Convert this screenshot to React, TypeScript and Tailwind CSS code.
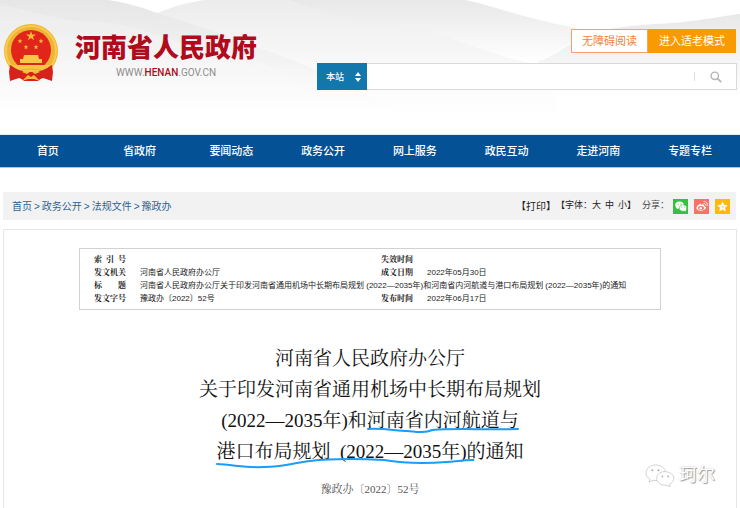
import React from 'react'

const navItems = ['首页', '省政府', '要闻动态', '政务公开', '网上服务', '政民互动', '走进河南', '专题专栏']
const crumbs = ['首页', '政务公开', '法规文件', '豫政办']

const HeaderBackground = () => (
  <svg className="absolute inset-0 h-full w-full" viewBox="0 0 740 135" preserveAspectRatio="none" aria-hidden="true">
    <defs>
      <linearGradient id="fade" x1="0" y1="0" x2="0" y2="1">
        <stop offset="0" stopColor="#e6e6e6" />
        <stop offset="0.5" stopColor="#f2f2f2" />
        <stop offset="1" stopColor="#ffffff" />
      </linearGradient>
      <linearGradient id="fadeSoft" x1="0" y1="0" x2="0" y2="1">
        <stop offset="0" stopColor="#ececec" />
        <stop offset="0.6" stopColor="#fafafa" />
        <stop offset="1" stopColor="#ffffff" />
      </linearGradient>
      <linearGradient id="fadeShort" x1="0" y1="0" x2="0" y2="1">
        <stop offset="0" stopColor="#e8e8e8" />
        <stop offset="1" stopColor="#ffffff" />
      </linearGradient>
    </defs>
    <path d="M538 62C556 56 562 48 580 40C600 28 630 26 660 24C695 22 715 17 740 14V100H538Z" fill="url(#fadeShort)" />
    <path d="M465 0C490 5 520 17 575 28C590 32 562 52 538 62L400 40L288 0Z" fill="url(#fadeShort)" />
    <path d="M157 13C175 6 190 2 205 0H288C310 6 335 18 365 22C390 26 410 24 432 31C460 42 500 58 550 68L560 118H150Z" fill="url(#fadeSoft)" />
    <path d="M0 0H108C130 3 145 9 160 14C195 24 220 35 270 52C330 75 370 95 390 112H0Z" fill="url(#fade)" />
    <path d="M0 4C30 10 60 22 100 22C140 24 170 45 220 50C270 62 300 80 310 100L0 112Z" fill="#ffffff" fillOpacity="0.2" />
  </svg>
)

const Emblem = () => (
  <svg className="h-[58px] w-[54px] shrink-0" viewBox="0 0 54 58" aria-hidden="true">
    <path d="M8 40L6 56L16 53L20 57H34L38 53L48 56L46 40Z" fill="#d31c18" />
    <circle cx="27" cy="27" r="27" fill="#efb433" />
    <circle cx="27" cy="27" r="25" fill="none" stroke="#f8cc50" strokeWidth="2" />
    <circle cx="27" cy="26" r="20" fill="#e2251b" />
    <path d="M27 7l1.2 3.5H32l-3 2.2 1.1 3.6L27 14.1l-3.1 2.2 1.1-3.6-3-2.2h3.8Z" fill="#f5bb35" />
    {[[16, 17], [37, 17], [22, 23], [32, 23]].map(([x, y]) => (
      <path key={`${x}-${y}`} transform={`translate(${x} ${y})`} d="M0-2.4L.7-.7 2.4-.7 1 .5 1.5 2.3 0 1.2-1.5 2.3-1 .5-2.4-.7-.7-.7Z" fill="#f5bb35" />
    ))}
    <path d="M20 31h14l1 4h3v4H16v-4h3ZM9 41h36l-3 4H12Z" fill="#f7c548" />
    <path d="M6 41C12 44 17 46 21 46L24 48H30L33 46C37 46 42 44 48 41L49 48L48 57L39 54L32 57H22L15 54L6 57L5 48Z" fill="#d7211b" />
    <path d="M18 48L24 44H30L36 48L31 50L27 47L23 50ZM18 57L24 51L27 53L30 51L36 57L30 55H24Z" fill="#f3b936" />
    <path d="M8 41C16 49 38 49 46 41" fill="none" stroke="#f7c548" strokeWidth="1.5" />
  </svg>
)

const Header = () => (
  <header className="relative h-[135px] border-b border-[#e3edf4]">
    <HeaderBackground />
    <div className="relative flex justify-between pr-[3px] pl-1">
      <a href="#" className="flex items-start pt-6">
        <Emblem />
        <span className="ml-[17px] flex flex-col items-center pt-1">
          <span className="text-[26px] leading-10 font-black text-[#b00a1c]">河南省人民政府</span>
          <span className="font-[Roboto] text-[10px] leading-[10px] text-[#8d8d8d]">
            WWW.<b className="font-medium text-[#b00a1c]">HENAN</b>.GOV.CN
          </span>
        </span>
      </a>
      <div className="flex w-[420px] flex-col items-end pt-[29px]">
        <div className="mr-px flex h-6 text-[11px] leading-5">
          <button className="w-[77px] border border-[#f7a26b] bg-white text-[#f37f3c]">无障碍阅读</button>
          <button className="w-[88px] bg-[#f99b00] text-white">进入适老模式</button>
        </div>
        <form className="mt-[10px] flex h-[27px] w-full border border-[#d9d9d9] bg-white">
          <div className="relative -my-px -ml-px w-[50px] bg-[#1277ad]">
            <select aria-label="搜索范围" className="h-full w-full appearance-none bg-transparent pl-[9px] text-[9px] font-medium text-white outline-none">
              <option>本站</option>
            </select>
            <svg className="pointer-events-none absolute top-2 right-[6px] h-3 w-[6px]" viewBox="0 0 6 12" fill="#fff" aria-hidden="true">
              <path d="M3 1L6 5H0ZM3 11L0 7H6Z" />
            </svg>
          </div>
          <input aria-label="搜索" className="min-w-0 flex-1 bg-transparent px-2 text-xs outline-none" />
          <button type="button" aria-label="搜索" className="my-2 flex w-[42px] items-center justify-center border-l border-[#dddddd]">
            <svg className="h-3 w-3" viewBox="0 0 12 12" fill="none" stroke="#b5b5b5" aria-hidden="true">
              <circle cx="4.8" cy="4.8" r="3.7" strokeWidth="1.4" />
              <path d="M7.6 7.6L11.2 11.2" strokeWidth="1.8" />
            </svg>
          </button>
        </form>
      </div>
    </div>
  </header>
)

const Share = () => (
  <div className="flex gap-[6px]">
    <button aria-label="微信" className="flex size-[15px] items-center justify-center bg-[#35c03f]">
      <svg className="h-[11px] w-3" viewBox="0 0 24 22" aria-hidden="true">
        <ellipse cx="9" cy="8" rx="8.5" ry="7" fill="#fff" />
        <path d="M4 12L3 17L8 14Z" fill="#fff" />
        <ellipse cx="16" cy="14" rx="7.5" ry="6.3" fill="#fff" stroke="#35c03f" />
        <path d="M18 19L22 21L21 16Z" fill="#fff" />
        <g fill="#35c03f"><circle cx="6.3" cy="6" r="1.2" /><circle cx="12" cy="6" r="1.2" /><circle cx="13.5" cy="12" r="1" /><circle cx="18.5" cy="12" r="1" /></g>
      </svg>
    </button>
    <button aria-label="微博" className="flex size-[15px] items-center justify-center bg-[#fa7267]">
      <svg className="size-3" viewBox="0 0 24 24" fill="none" stroke="#fff" aria-hidden="true">
        <path d="M10 7C4 9 0 14 1 17C3 23 17 23 20 16C21 13 17 13 16 12C16 8 13 8 10 10Z" fill="#fff" stroke="none" />
        <ellipse cx="10" cy="16" rx="6" ry="4" fill="#fa7267" stroke="none" />
        <circle cx="9.5" cy="16.5" r="2.4" fill="#fff" stroke="none" />
        <path d="M15 3C20 2 24 7 22 12M15.5 7C18 6.5 19.5 8.5 18.5 11" strokeWidth="1.8" />
      </svg>
    </button>
    <button aria-label="收藏" className="flex size-[15px] items-center justify-center bg-[#fdb90e]">
      <svg className="size-[11px]" viewBox="0 0 24 24" aria-hidden="true">
        <path d="M12 1l3.4 7.3 8 1-5.9 5.5 1.5 7.9-7-3.9-7 3.9 1.5-7.9L.6 9.3l8-1Z" fill="#fff" />
        <path d="M9 11h6l-5 4h5" fill="none" stroke="#fdb90e" strokeWidth="1" />
      </svg>
    </button>
  </div>
)

const Toolbar = () => (
  <div className="mr-1 ml-[3px] flex h-7 items-center justify-between bg-[#f2f2f2] pr-[6px] pl-[9px]">
    <nav aria-label="当前位置" className="flex gap-[2px] text-[10px] text-[#2d6496]">
      {crumbs.map((item, i) => (
        <React.Fragment key={item}>
          {i > 0 && <span>&gt;</span>}
          <a href="#">{item}</a>
        </React.Fragment>
      ))}
    </nav>
    <div className="flex items-center text-[9px] text-[#222222]">
      <button className="text-[10px]">【打印】</button>
      <span>【字体：</span>
      <span className="flex gap-1">
        <button>大</button>
        <button>中</button>
        <button>小</button>
      </span>
      <span>】</span>
      <span className="mr-1 ml-[6px] text-[#444444]">分享：</span>
      <Share />
    </div>
  </div>
)

const Label = ({ children }: { children: string }) => (
  <th scope="row" className="p-0 text-left font-['Liberation_Serif','Noto_Serif_CJK_SC','Noto_Sans_CJK_SC',serif] font-bold">
    <span className="block w-8 [text-align-last:justify]">{children}</span>
  </th>
)

const InfoTable = () => (
  <div className="mx-[75px] border border-[#d2d2d2] py-1 pr-2 pl-[14px]">
    <table className="w-full table-fixed text-[8px] leading-[13px] text-[#222222]">
      <colgroup>
        <col className="w-[46px]" />
        <col className="w-[241px]" />
        <col className="w-[46px]" />
        <col />
      </colgroup>
      <tbody>
        <tr>
          <Label>索 引 号</Label>
          <td />
          <Label>失效时间</Label>
          <td />
        </tr>
        <tr>
          <Label>发文机关</Label>
          <td>河南省人民政府办公厅</td>
          <Label>成文日期</Label>
          <td>2022年05月30日</td>
        </tr>
        <tr>
          <Label>标 题</Label>
          <td colSpan={3} className="whitespace-nowrap">
            河南省人民政府办公厅关于印发河南省通用机场中长期布局规划 (2022—2035年)和河南省内河航道与港口布局规划 (2022—2035年)的通知
          </td>
        </tr>
        <tr>
          <Label>发文字号</Label>
          <td>豫政办〔2022〕52号</td>
          <Label>发布时间</Label>
          <td>2022年06月17日</td>
        </tr>
      </tbody>
    </table>
  </div>
)

const Watermark = () => (
  <div className="absolute right-[21px] bottom-[21px] flex items-center gap-1">
    <svg className="h-[23px] w-[30px]" viewBox="0 0 31 24" fill="#fff" stroke="#c4c4c4" strokeWidth="0.8" aria-hidden="true">
      <path d="M11 1C5 1 1 5 1 9.5C1 12 2.5 14.5 5 16L4 19L8 17C14 18.5 21 15 21 9C21 4.5 17 1 11 1Z" />
      <path d="M20 8C15 8 12 11.5 12 15C12 19 16 22.5 21 22L26 23.5L25.5 21C28 19.5 30 17.5 30 15C30 11 26 8 20 8Z" />
      <g fill="#aaa" stroke="none"><circle cx="7.5" cy="6.5" r="1" /><circle cx="14" cy="6.5" r="1" /><circle cx="18" cy="13" r="0.9" /><circle cx="24" cy="13" r="0.9" /></g>
    </svg>
    <span className="text-[18px] leading-6 text-white [text-shadow:1px_1px_1px_#999999,0_0_1px_#bbbbbb]">珂尔</span>
  </div>
)

const App = () => {
  return (
    <div className="flex min-h-screen flex-col bg-white font-['Liberation_Sans','Noto_Sans_CJK_SC',sans-serif]">
      <Header />
      <nav className="grid h-[33px] grid-cols-8 items-center border-b border-[#a9c5dc] bg-[#045295] pr-1 pl-[2px] text-center text-[11px] font-medium text-white">
        {navItems.map((item) => (
          <a key={item} href="#">{item}</a>
        ))}
      </nav>
      <div className="h-6" />
      <Toolbar />
      <main className="relative mx-[3px] mt-[9px] flex-1 border border-b-0 border-[#e6e6e6] pt-[18px]">
        <InfoTable />
        <div className="pt-[33px] pb-2 text-center font-['Liberation_Serif','Noto_Serif_CJK_SC','Noto_Sans_CJK_SC',serif]">
          <h1 className="text-[19px] leading-[31px] text-[#111111]">
            河南省人民政府办公厅
            <br />
            关于印发河南省通用机场中长期布局规划
            <br />
            (2022—2035年)和
            <span className="relative">
              河南省内河航道与
              <svg className="absolute top-full left-0 -mt-1 h-2 w-full" viewBox="0 0 156 8" preserveAspectRatio="none" fill="none" stroke="#1b9cf5" strokeWidth="2" strokeLinecap="round" aria-hidden="true">
                <path d="M1 2C18 1 30 4 42 4C52 5 60 6 67 3C90 1 120 3 155 2" />
              </svg>
            </span>
            <br />
            <span className="relative">
              港口布局规划&nbsp; (2022—2035年)的
              <svg className="absolute top-full left-0 -mt-1 h-[11px] w-[96%]" viewBox="0 0 269 11" preserveAspectRatio="none" fill="none" stroke="#1b9cf5" strokeWidth="2" strokeLinecap="round" aria-hidden="true">
                <path d="M1 6C20 7 32 10 50 9C72 9 78 5 98 3C125 0 155 1 175 2C200 6 225 5 240 4C252 3 258 2 268 2" />
              </svg>
            </span>
            通知
          </h1>
          <p className="mt-3 text-[11px] leading-5 text-[#555555]">豫政办〔2022〕52号</p>
        </div>
        <Watermark />
      </main>
    </div>
  )
}

export default App
